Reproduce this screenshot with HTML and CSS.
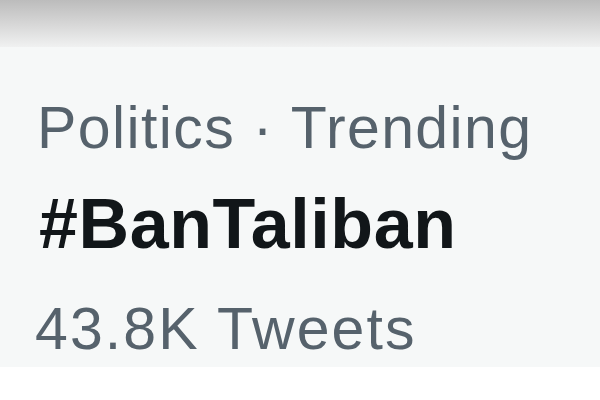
FILE: index.html
```html
<!DOCTYPE html>
<html lang="en">
<head>
<meta charset="utf-8">
<title>Trending</title>
<link rel="stylesheet" href="styles.css">
</head>
<body>
  <div class="shade"></div>
  <section class="trend">
    <div class="meta">Politics · Trending</div>
    <div class="tag">#BanTaliban</div>
    <div class="count">43.8K Tweets</div>
  </section>
</body>
</html>
```

FILE: styles.css
```css
html, body {
  margin: 0;
  padding: 0;
  background: #ffffff;
  width: 600px;
  height: 400px;
  overflow: hidden;
}

.shade {
  height: 47px;
  background: linear-gradient(to bottom, #bcbcbc 0%, #d6d6d6 50%, #f0f1f1 100%);
}

.trend {
  box-sizing: border-box;
  height: 320px;
  background: #f6f8f8;
  padding: 52px 0 0 37px;
  font-family: "Liberation Sans", Arial, sans-serif;
}

.meta,
.count {
  font-size: 59px;
  line-height: 59px;
  color: #56626c;
  letter-spacing: 1.4px;
}

.tag {
  margin-top: 31px;
  margin-left: 2px;
  font-size: 70px;
  line-height: 70px;
  font-weight: bold;
  color: #111619;
  letter-spacing: 0.6px;
}

.count {
  margin-top: 41px;
  margin-left: -2px;
  letter-spacing: 2.1px;
}
```
